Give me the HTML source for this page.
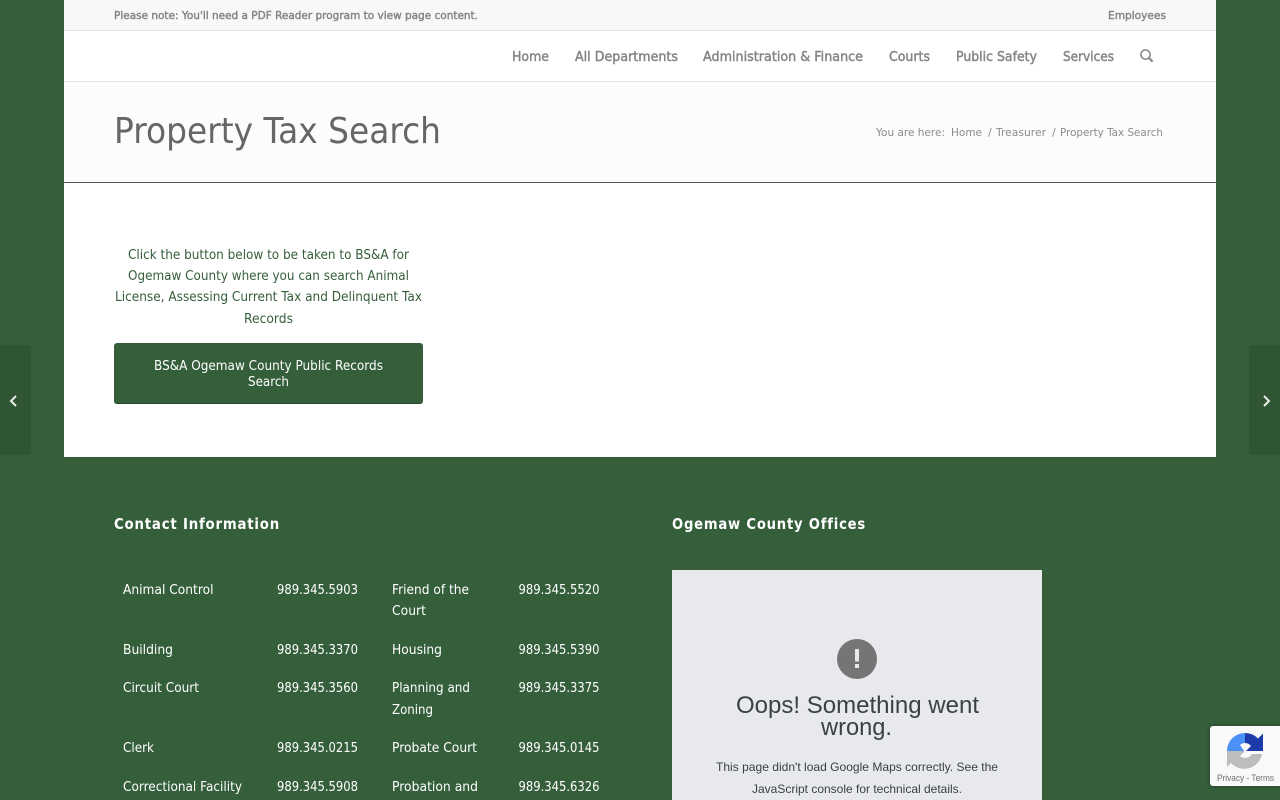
<!DOCTYPE html>
<html lang="en">
<head>
<meta charset="utf-8">
<title>Property Tax Search</title>
<style>
html,body{margin:0;padding:0;width:1280px;height:800px;overflow:hidden;background:#355e3b}
.abs{position:absolute}
svg{position:absolute;left:0;top:0}
text{font-family:"DejaVu Sans","Liberation Sans",sans-serif}
.semi{stroke-width:.45px}
.top{font-size:11px;fill:#858585;stroke:#858585}
.nav{font-size:13px;fill:#858585;stroke:#858585}
.bc{font-size:11px;fill:#8c8c8c}
.p{font-size:13px;fill:#355e3b}
.w{font-size:13px;fill:#fff}
.h{font-size:15px;fill:#fff;font-weight:bold;letter-spacing:.9px}
.m{font-family:"Liberation Sans",Arial,sans-serif;fill:#3c4043}
</style>
</head>
<body>
<div class="abs" style="left:64px;top:0;width:1152px;height:457px;background:#fff"></div>
<div class="abs" style="left:64px;top:0;width:1152px;height:30px;background:#f8f8f8;border-bottom:1px solid #e4e4e4"></div>
<div class="abs" style="left:64px;top:81px;width:1152px;height:100px;background:#fcfcfc;border-top:1px solid #e4e4e4;border-bottom:1px solid #4c5c4f"></div>
<div class="abs" style="left:114px;top:343px;width:309px;height:60px;background:#355e3b;border-bottom:1px solid #27472c;border-radius:3px"></div>
<div class="abs" style="left:0;top:345px;width:31px;height:110px;background:#2f5535;border-radius:0 3px 3px 0"></div>
<div class="abs" style="left:1249px;top:345px;width:31px;height:110px;background:#2f5535;border-radius:3px 0 0 3px"></div>
<div class="abs" style="left:672px;top:570px;width:370px;height:230px;background:#e8e9ed"></div>
<div class="abs" style="left:1210px;top:726px;width:70px;height:60px;background:#f9f9f9;border-radius:3px 0 0 3px;box-shadow:0 0 5px rgba(0,0,0,.35)"></div>

<svg width="1280" height="800" viewBox="0 0 1280 800" xmlns="http://www.w3.org/2000/svg">
<text class="top semi" x="114" y="19" textLength="364" lengthAdjust="spacingAndGlyphs">Please note: You'll need a PDF Reader program to view page content.</text>
<text class="top semi" x="1108" y="19" textLength="58" lengthAdjust="spacingAndGlyphs">Employees</text>

<text class="nav semi" x="512" y="61" textLength="37" lengthAdjust="spacingAndGlyphs">Home</text>
<text class="nav semi" x="575" y="61" textLength="103" lengthAdjust="spacingAndGlyphs">All Departments</text>
<text class="nav semi" x="703" y="61" textLength="160" lengthAdjust="spacingAndGlyphs">Administration &amp; Finance</text>
<text class="nav semi" x="889" y="61" textLength="41" lengthAdjust="spacingAndGlyphs">Courts</text>
<text class="nav semi" x="956" y="61" textLength="81" lengthAdjust="spacingAndGlyphs">Public Safety</text>
<text class="nav semi" x="1063" y="61" textLength="51" lengthAdjust="spacingAndGlyphs">Services</text>
<circle cx="1145.500" cy="54.500" r="4.600" fill="none" stroke="#858585" stroke-width="1.500"/>
<path d="M1149 58l3.600 3.600" stroke="#858585" stroke-width="2.200" fill="none"/>

<text x="114" y="143" font-size="36" fill="#666" textLength="327" lengthAdjust="spacingAndGlyphs">Property Tax Search</text>

<text class="bc" x="876" y="136" textLength="69" lengthAdjust="spacingAndGlyphs">You are here:</text>
<text class="bc" x="951" y="136" textLength="31" lengthAdjust="spacingAndGlyphs">Home</text>
<text class="bc" x="988" y="136">/</text>
<text class="bc" x="996" y="136" textLength="50" lengthAdjust="spacingAndGlyphs">Treasurer</text>
<text class="bc" x="1052" y="136">/</text>
<text class="bc" x="1060" y="136" textLength="103" lengthAdjust="spacingAndGlyphs">Property Tax Search</text>

<text class="p" x="128" y="259" textLength="281" lengthAdjust="spacingAndGlyphs">Click the button below to be taken to BS&amp;A for</text>
<text class="p" x="128" y="280" textLength="281" lengthAdjust="spacingAndGlyphs">Ogemaw County where you can search Animal</text>
<text class="p" x="115" y="301" textLength="307" lengthAdjust="spacingAndGlyphs">License, Assessing Current Tax and Delinquent Tax</text>
<text class="p" x="244" y="323" textLength="49" lengthAdjust="spacingAndGlyphs">Records</text>

<text class="w" x="154" y="370" textLength="229" lengthAdjust="spacingAndGlyphs">BS&amp;A Ogemaw County Public Records</text>
<text class="w" x="248" y="386" textLength="41" lengthAdjust="spacingAndGlyphs">Search</text>

<path d="M16 396l-5 5 5 5" fill="none" stroke="#e8efe9" stroke-width="2"/>
<path d="M1264 396l5 5-5 5" fill="none" stroke="#e8efe9" stroke-width="2"/>

<text class="h" x="114" y="529" textLength="166" lengthAdjust="spacingAndGlyphs">Contact Information</text>
<text class="h" x="672" y="529" textLength="194" lengthAdjust="spacingAndGlyphs">Ogemaw County Offices</text>

<text class="w" x="123" y="594" textLength="90.500" lengthAdjust="spacingAndGlyphs">Animal Control</text>
<text class="w" x="277" y="594" textLength="81" lengthAdjust="spacingAndGlyphs">989.345.5903</text>
<text class="w" x="392" y="594" textLength="77" lengthAdjust="spacingAndGlyphs">Friend of the</text>
<text class="w" x="518.500" y="594" textLength="81" lengthAdjust="spacingAndGlyphs">989.345.5520</text>
<text class="w" x="392" y="615" textLength="34" lengthAdjust="spacingAndGlyphs">Court</text>

<text class="w" x="123" y="654" textLength="50" lengthAdjust="spacingAndGlyphs">Building</text>
<text class="w" x="277" y="654" textLength="81" lengthAdjust="spacingAndGlyphs">989.345.3370</text>
<text class="w" x="392" y="654" textLength="50" lengthAdjust="spacingAndGlyphs">Housing</text>
<text class="w" x="518.500" y="654" textLength="81" lengthAdjust="spacingAndGlyphs">989.345.5390</text>

<text class="w" x="123" y="692" textLength="76" lengthAdjust="spacingAndGlyphs">Circuit Court</text>
<text class="w" x="277" y="692" textLength="81" lengthAdjust="spacingAndGlyphs">989.345.3560</text>
<text class="w" x="392" y="692" textLength="78" lengthAdjust="spacingAndGlyphs">Planning and</text>
<text class="w" x="518.500" y="692" textLength="81" lengthAdjust="spacingAndGlyphs">989.345.3375</text>
<text class="w" x="392" y="714" textLength="41" lengthAdjust="spacingAndGlyphs">Zoning</text>

<text class="w" x="123" y="752" textLength="31" lengthAdjust="spacingAndGlyphs">Clerk</text>
<text class="w" x="277" y="752" textLength="81" lengthAdjust="spacingAndGlyphs">989.345.0215</text>
<text class="w" x="392" y="752" textLength="85" lengthAdjust="spacingAndGlyphs">Probate Court</text>
<text class="w" x="518.500" y="752" textLength="81" lengthAdjust="spacingAndGlyphs">989.345.0145</text>

<text class="w" x="123" y="791" textLength="119" lengthAdjust="spacingAndGlyphs">Correctional Facility</text>
<text class="w" x="277" y="791" textLength="81" lengthAdjust="spacingAndGlyphs">989.345.5908</text>
<text class="w" x="392" y="791" textLength="86" lengthAdjust="spacingAndGlyphs">Probation and</text>
<text class="w" x="518.500" y="791" textLength="81" lengthAdjust="spacingAndGlyphs">989.345.6326</text>

<circle cx="857" cy="659" r="20" fill="#757575"/>
<rect x="855" y="649" width="4" height="12.500" fill="#e8e9ed"/>
<rect x="855" y="664" width="4" height="4" fill="#e8e9ed"/>
<text class="m" x="736" y="713" font-size="24" textLength="243" lengthAdjust="spacingAndGlyphs">Oops! Something went</text>
<text class="m" x="821" y="735" font-size="24" textLength="71" lengthAdjust="spacingAndGlyphs">wrong.</text>
<text class="m" x="716" y="771" font-size="12" textLength="282" lengthAdjust="spacingAndGlyphs">This page didn't load Google Maps correctly. See the</text>
<text class="m" x="752" y="793" font-size="12" textLength="210" lengthAdjust="spacingAndGlyphs">JavaScript console for technical details.</text>

<path d="M1245 733V743A8 8 0 0 0 1240 745L1244 751H1227V750A18 18 0 0 1 1245 733Z" fill="#4a90f5"/>
<path d="M1245 733A18 18 0 0 1 1258 738.500L1263 733.500V751H1246L1251 746A8 8 0 0 0 1245 743Z" fill="#1c3aa9"/>
<path d="M1227 751H1245L1240 756A8 8 0 0 0 1252 754H1262A18 18 0 0 1 1231 763L1227 767Z" fill="#bdbdbd"/>
<text class="m" x="1217" y="781" font-size="9" style="fill:#6f6f6f" textLength="57" lengthAdjust="spacingAndGlyphs">Privacy - Terms</text>
</svg>
</body>
</html>
